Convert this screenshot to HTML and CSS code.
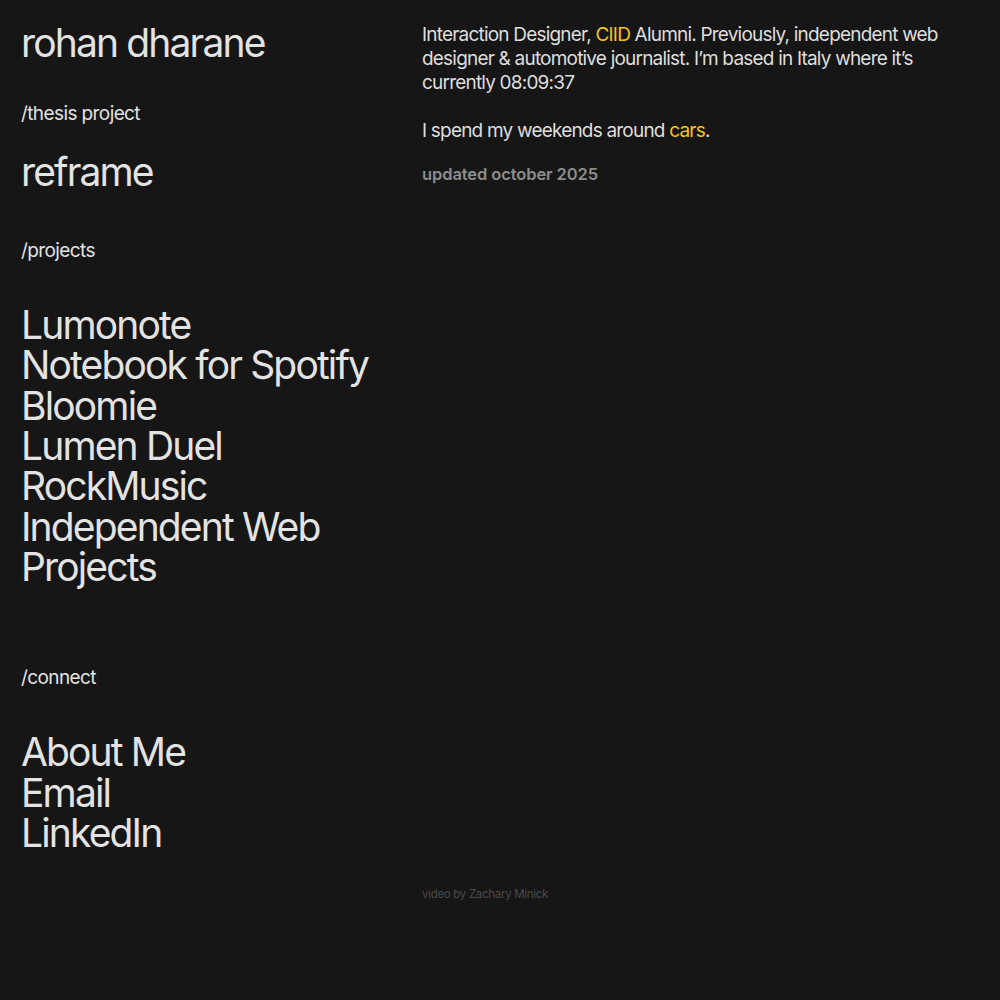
FILE: index.html
```html
<!DOCTYPE html>
<html lang="en">
<head>
<meta charset="utf-8">
<title>rohan dharane</title>
<link rel="stylesheet" href="styles.css">
</head>
<body>
<div class="page">
  <nav class="left">
    <h1 class="big name">rohan dharane</h1>
    <div class="label thesis-label">/thesis project</div>
    <a class="big reframe" href="#">reframe</a>
    <div class="label projects-label">/projects</div>
    <ul class="list projects">
      <li><a href="#">Lumonote</a></li>
      <li><a href="#">Notebook for Spotify</a></li>
      <li><a href="#">Bloomie</a></li>
      <li><a href="#">Lumen Duel</a></li>
      <li><a href="#">RockMusic</a></li>
      <li><a href="#">Independent Web Projects</a></li>
    </ul>
    <div class="label connect-label">/connect</div>
    <ul class="list connect">
      <li><a href="#">About Me</a></li>
      <li><a href="#">Email</a></li>
      <li><a href="#">LinkedIn</a></li>
    </ul>
  </nav>
  <main class="right">
    <p class="bio">Interaction Designer, <span class="hl">CIID</span> Alumni. Previously, independent web designer &amp; automotive journalist. I’m based in Italy where it’s currently 08:09:37</p>
    <p class="bio second">I spend my weekends around <span class="hl">cars</span>.</p>
    <p class="updated">updated october 2025</p>
  </main>
  <div class="spacer"></div>
  <div class="caption">video by Zachary Minick</div>
</div>
</body>
</html>
```

FILE: styles.css
```css
html, body {
  margin: 0;
  padding: 0;
  background: #161616;
}
body {
  font-family: Inter, "Noto Sans", sans-serif;
  color: #e3e3e3;
  -webkit-font-smoothing: antialiased;
}
.page {
  display: grid;
  grid-template-columns: 400px 1fr;
  padding: 19px 0 0 21px;
}
.left {
  display: flex;
  flex-direction: column;
  align-items: flex-start;
}
a {
  color: inherit;
  text-decoration: none;
}
.big {
  margin: 0;
  font-size: 39px;
  font-weight: 400;
  line-height: 48px;
  letter-spacing: -1.85px;
}
.label {
  font-size: 19px;
  line-height: 24px;
  letter-spacing: -0.6px;
}
.thesis-label { margin-top: 35px; }
.reframe { margin-top: 22px; }
.projects-label { margin-top: 43px; }
.list {
  list-style: none;
  margin: 42px 0 0;
  padding: 0;
  font-size: 39px;
  line-height: 40.33px;
  letter-spacing: -1.85px;
}
.connect-label { margin-top: 79px; }
.right {
  padding-left: 1px;
  padding-top: 4px;
}
.bio {
  margin: 0;
  font-size: 19px;
  line-height: 24px;
  letter-spacing: -0.8px;
  max-width: 540px;
  color: #dedede;
}
.bio.second { margin-top: 24px; }
.hl { color: #f2c418; }
.updated {
  margin: 21px 0 0;
  font-size: 16.5px;
  line-height: 20px;
  font-weight: 600;
  color: #8c8c8c;
  letter-spacing: -0.1px;
}
.caption {
  margin-top: 33px;
  padding-left: 1px;
  font-size: 11.5px;
  line-height: 16px;
  color: #4a4a4a;
  letter-spacing: -0.3px;
}
```
